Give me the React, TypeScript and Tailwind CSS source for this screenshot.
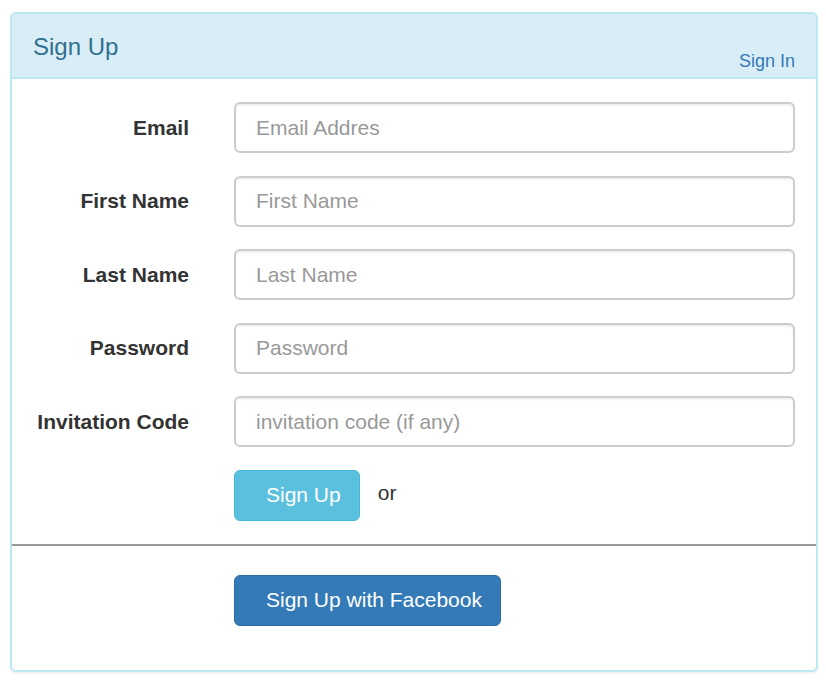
const fields = [
  { label: 'Email', placeholder: 'Email Addres', type: 'email' },
  { label: 'First Name', placeholder: 'First Name', type: 'text' },
  { label: 'Last Name', placeholder: 'Last Name', type: 'text' },
  { label: 'Password', placeholder: 'Password', type: 'password' },
  { label: 'Invitation Code', placeholder: 'invitation code (if any)', type: 'text' },
]

export default function App() {
  return (
    <div className="min-h-screen bg-white pt-[12px] pl-[10px] font-['Liberation_Sans',Arial,sans-serif] text-[#333]">
      <div className="w-[808px] rounded-[6px] border-2 border-[#bce8f1] bg-white shadow-[0_1.5px_1.5px_rgba(0,0,0,0.05)] overflow-hidden">
        {/* Header */}
        <div className="flex h-[65px] justify-between border-b-2 border-[#bce8f1] bg-[#d9edf7] pl-[21px] pr-[21px]">
          <h3 className="pt-[20px] text-[24px] leading-[26px] text-[#31708f]">Sign Up</h3>
          <a href="#" className="self-end pb-[3px] text-[18px] leading-[26px] text-[#337ab7]">
            Sign In
          </a>
        </div>

        {/* Form */}
        <form className="flex flex-col gap-[22.5px] px-[21px] pt-[23px]">
          {fields.map((f) => (
            <div key={f.label} className="flex items-center">
              <label className="w-[156px] shrink-0 text-right text-[21px] font-bold leading-[30px]">{f.label}</label>
              <input
                type={f.type}
                placeholder={f.placeholder}
                className="ml-[45px] h-[51px] w-[561px] rounded-[6px] border-2 border-[#ccc] px-[20px] text-[21px] text-[#555] shadow-[inset_0_1.5px_1.5px_rgba(0,0,0,0.075)] outline-none placeholder:text-[#999]"
              />
            </div>
          ))}
          <div className="flex items-center pl-[201px]">
            <button
              type="button"
              className="h-[51px] rounded-[6px] border-[1.5px] border-[#46b8da] bg-[#5bc0de] pl-[31px] pr-[18px] text-[21px] leading-[30px] text-white"
            >
              Sign Up
            </button>
            <span className="ml-[18px] pb-[4px] text-[21px] leading-[30px]">or</span>
          </div>
        </form>

        <hr className="mt-[23px] border-0 border-t-2 border-[#999]" />

        <div className="px-[21px] pt-[29px] pb-[44px]">
          <div className="pl-[201px]">
            <button
              type="button"
              className="h-[51px] rounded-[6px] border-[1.5px] border-[#2e6da4] bg-[#337ab7] pl-[31px] pr-[18px] text-[21px] leading-[30px] text-white"
            >
              Sign Up with Facebook
            </button>
          </div>
        </div>
      </div>
    </div>
  )
}
